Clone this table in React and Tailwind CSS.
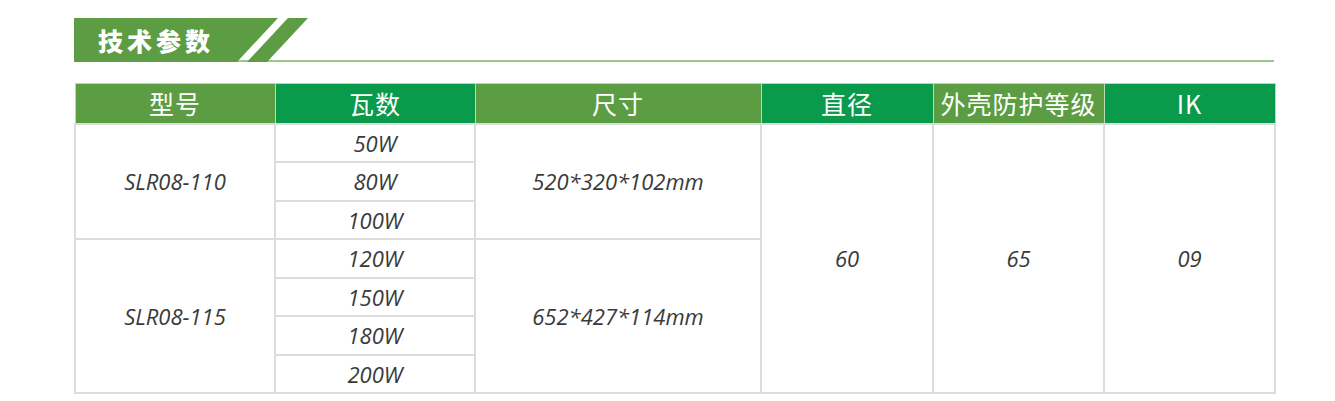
import React from "react";

const cjk = "font-['Noto_Sans_CJK_SC','Noto_Sans',sans-serif]";
const num = "font-['Open_Sans','Noto_Sans',sans-serif] italic";

const headers = [
  { label: "型号", w: "w-[200px]", bg: "bg-[#5c9d44]" },
  { label: "瓦数", w: "w-[200px]", bg: "bg-[#099a4b]" },
  { label: "尺寸", w: "w-[286px]", bg: "bg-[#5c9d44]" },
  { label: "直径", w: "w-[172px]", bg: "bg-[#099a4b]" },
  { label: "外壳防护等级", w: "w-[171px]", bg: "bg-[#5c9d44]" },
  { label: "IK", w: "w-[171px]", bg: "bg-[#099a4b]" },
];

const groups = [
  { model: "SLR08-110", size: "520*320*102mm", watts: ["50W", "80W", "100W"] },
  { model: "SLR08-115", size: "652*427*114mm", watts: ["120W", "150W", "180W", "200W"] },
];

function Banner() {
  return (
    <div className="relative h-[44px] border-b-2 border-[#9cc78a]">
      <svg className="absolute left-0 top-0" width="240" height="44" viewBox="0 0 240 44">
        <polygon points="0,0 204,0 163,44 0,44" fill="#5c9d44" />
        <polygon points="214,0 234,0 193,44 173,44" fill="#5c9d44" />
      </svg>
      <span className={`relative block pl-[24px] leading-[44px] text-[25px] font-black tracking-[4px] text-white ${cjk}`}>
        技术参数
      </span>
    </div>
  );
}

function Cell({ children, rowSpan, className = "" }) {
  return (
    <td
      rowSpan={rowSpan}
      className={`border-2 border-[#dcdcdc] p-0 text-center align-middle text-[22px] text-[#3a3a3a] ${num} ${className}`}
    >
      {children}
    </td>
  );
}

export default function App() {
  return (
    <div className="bg-white w-[1335px] h-[401px] pt-[18px] pl-[74px]">
      <div className="w-[1200px]">
        <Banner />
        <table className="mt-[21px] w-[1200px] table-fixed border-collapse">
          <thead>
            <tr className="h-[40px]">
              {headers.map((h) => (
                <th
                  key={h.label}
                  className={`${h.w} ${h.bg} border border-[#b9dcae] p-0 text-center text-[25px] leading-[38px] font-normal tracking-[1px] text-white ${cjk}`}
                >
                  {h.label}
                </th>
              ))}
            </tr>
          </thead>
          <tbody>
            {groups.map((g, gi) =>
              g.watts.map((w, wi) => (
                <tr key={w} className="h-[38.5px]">
                  {wi === 0 && <Cell rowSpan={g.watts.length}>{g.model}</Cell>}
                  <Cell className="leading-[34px]">{w}</Cell>
                  {wi === 0 && <Cell rowSpan={g.watts.length}>{g.size}</Cell>}
                  {gi === 0 && wi === 0 && (
                    <>
                      <Cell rowSpan={7}>60</Cell>
                      <Cell rowSpan={7}>65</Cell>
                      <Cell rowSpan={7}>09</Cell>
                    </>
                  )}
                </tr>
              ))
            )}
          </tbody>
        </table>
      </div>
    </div>
  );
}
